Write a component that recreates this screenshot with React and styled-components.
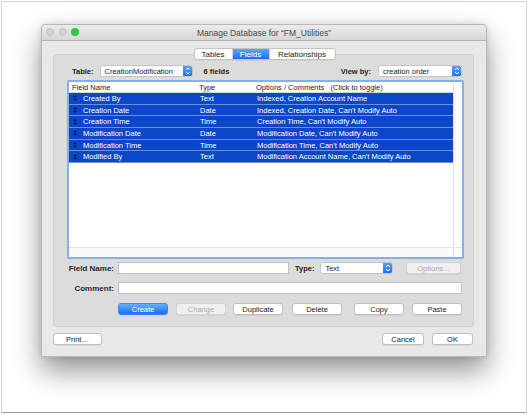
import React from "react";
import styled, { createGlobalStyle } from "styled-components";

const GlobalStyle = createGlobalStyle`
  html, body {
    margin: 0;
    padding: 0;
    background: #ffffff;
  }
  body {
    font-family: "Liberation Sans", Arial, sans-serif;
    color: #1e1e1e;
  }
`;

const Frame = styled.div`
  box-sizing: border-box;
  margin: 1px 0 0 1px;
  width: 526px;
  height: 412px;
  border: 1px solid #d2d2d2;
  border-bottom-color: #9a9a9a;
  padding: 22px 0 0 39px;
`;

const Window = styled.div`
  box-sizing: border-box;
  width: 446px;
  height: 333px;
  background: #e8e8e8;
  border: 1px solid #b8b8b8;
  border-radius: 4px 4px 2px 2px;
  box-shadow: 0 14px 28px rgba(0, 0, 0, 0.42), 0 0 6px rgba(0, 0, 0, 0.12);
  display: flex;
  flex-direction: column;
`;

const TitleBar = styled.div`
  height: 15px;
  display: flex;
  align-items: center;
  justify-content: center;
  position: relative;
  background: linear-gradient(#ececec, #d6d6d6);
  border-bottom: 1px solid #b4b4b4;
  border-radius: 4px 4px 0 0;
  font-size: 8.5px;
  color: #4a4a4a;
`;

const Lights = styled.div`
  position: absolute;
  left: 4px;
  top: 3px;
  display: flex;
  gap: 4.5px;
`;

const Light = styled.span`
  width: 8px;
  height: 8px;
  border-radius: 50%;
  background: ${({ $color }) => $color};
  border: ${({ $color }) => ($color === "#2ac940" ? "none" : "0.5px solid #c4c4c4")};
  box-sizing: border-box;
`;

const Body = styled.div`
  flex: 1;
  display: flex;
  flex-direction: column;
  padding: 7px 12px 11px 11px;
`;

const Tabs = styled.div`
  position: relative;
  z-index: 1;
  align-self: center;
  display: flex;
  height: 12px;
  margin-bottom: -6px;
  margin-left: 2px;
  background: #fff;
  border: 1px solid #c3c3c3;
  border-radius: 3px;
  box-sizing: border-box;
  overflow: hidden;
  box-shadow: 0 0.5px 0 rgba(0, 0, 0, 0.08);
`;

const Tab = styled.div`
  display: flex;
  align-items: center;
  justify-content: center;
  width: ${({ $w }) => $w}px;
  font-size: 8px;
  color: ${({ $active }) => ($active ? "#fff" : "#1a1a1a")};
  background: ${({ $active }) => ($active ? "linear-gradient(#5ca8fb, #1b6ff3)" : "transparent")};
  border-left: ${({ $first }) => ($first ? "none" : "1px solid #d4d4d4")};
`;

const Panel = styled.div`
  height: 273px;
  box-sizing: border-box;
  background: #dcdcdc;
  border: 1px solid #d2d2d2;
  border-radius: 3px;
  padding: 10px 9px 0 13px;
  display: flex;
  flex-direction: column;
`;

const TopRow = styled.div`
  display: flex;
  align-items: center;
  height: 12px;
  font-size: 7.5px;
  padding-left: 5px;
`;

const Label = styled.span`
  font-size: 7.5px;
  font-weight: ${({ $bold }) => ($bold ? "bold" : "normal")};
  color: #222;
  white-space: nowrap;
  margin-left: ${({ $ml }) => $ml || 0}px;
  margin-right: ${({ $mr }) => $mr || 0}px;
`;

const SelectBox = styled.div`
  box-sizing: border-box;
  width: ${({ $w }) => $w}px;
  height: 12px;
  display: flex;
  align-items: center;
  background: #fff;
  border: 1px solid #c4c4c4;
  border-radius: 2.5px;
  padding-left: 4px;
  font-size: 7.5px;
  color: #1a1a1a;
  margin-left: ${({ $ml }) => $ml || 0}px;
  margin-right: ${({ $mr }) => $mr || 0}px;
  overflow: hidden;
`;

const SelectText = styled.span`
  flex: 1;
  white-space: nowrap;
`;

const Stepper = styled.span`
  width: 10px;
  height: 12px;
  margin-right: -1px;
  display: flex;
  align-items: center;
  justify-content: center;
  background: linear-gradient(#5aa6fb, #1c70f2);
  border-radius: 0 2.5px 2.5px 0;
`;

const Spacer = styled.div`
  flex: 1;
`;

const List = styled.div`
  box-sizing: border-box;
  margin-top: 3px;
  width: 397px;
  height: 179px;
  background: #fff;
  border: 2px solid #86adec;
  border-radius: 2px;
  display: grid;
  grid-template-columns: 1fr 9px;
  grid-template-rows: 1fr 10px;
`;

const ListMain = styled.div`
  overflow: hidden;
`;

const VTrack = styled.div`
  border-left: 1px solid #e3e3e3;
  background: #fafafa;
`;

const HTrack = styled.div`
  border-top: 1px solid #e3e3e3;
  background: #fafafa;
`;

const Corner = styled.div`
  border-top: 1px solid #e3e3e3;
  border-left: 1px solid #e3e3e3;
  background: #fafafa;
`;

const HeaderRow = styled.div`
  display: grid;
  grid-template-columns: 127px 57px 1fr;
  height: 10px;
  align-items: center;
  padding-left: 3px;
  border-bottom: 1px solid #d6d6d6;
  font-size: 7.5px;
  color: #222;
  white-space: nowrap;
`;

const Row = styled.div`
  display: grid;
  grid-template-columns: 10px 117px 57px 1fr;
  height: 11.7px;
  box-sizing: border-box;
  align-items: center;
  padding-left: 4px;
  background: #0c47c9;
  border-bottom: 0.8px solid #6d8fdc;
  font-size: 7.5px;
  color: #fff;
  white-space: nowrap;
`;

const Grip = () => (
  <svg width="4" height="6" viewBox="0 0 4 6">
    <path d="M2 0 L4 2 L0 2 Z M2 6 L4 4 L0 4 Z" fill="#0a1f55" />
    <rect x="1.5" y="2" width="1" height="2" fill="#0a1f55" />
  </svg>
);

const Chevrons = () => (
  <svg width="6" height="8" viewBox="0 0 6 8">
    <path d="M1 3 L3 1 L5 3 M1 5 L3 7 L5 5" fill="none" stroke="#fff" strokeWidth="1" />
  </svg>
);

const FormRow = styled.div`
  display: flex;
  align-items: center;
  height: 12px;
  margin-top: ${({ $mt }) => $mt}px;
`;

const FormLabel = styled.span`
  width: 47px;
  text-align: right;
  font-size: 8px;
  font-weight: bold;
  color: #2a2a2a;
  margin-right: 4px;
  white-space: nowrap;
`;

const Input = styled.div`
  box-sizing: border-box;
  width: ${({ $w }) => $w}px;
  height: 12px;
  background: #fff;
  border: 1px solid #c2c2c2;
`;

const Button = styled.div`
  box-sizing: border-box;
  width: ${({ $w }) => $w || 50}px;
  height: 12px;
  margin-left: ${({ $ml }) => $ml || 0}px;
  display: flex;
  align-items: center;
  justify-content: center;
  font-size: 7.5px;
  border-radius: 3px;
  white-space: nowrap;
  color: ${({ $kind }) => ($kind === "primary" ? "#fff" : $kind === "disabled" ? "#a8a8a8" : "#1a1a1a")};
  background: ${({ $kind }) =>
    $kind === "primary"
      ? "linear-gradient(#66b0fb, #176ef2)"
      : $kind === "disabled"
      ? "#f0f0f0"
      : "#fff"};
  border: 1px solid
    ${({ $kind }) => ($kind === "primary" ? "#3f8af4" : $kind === "disabled" ? "#d4d4d4" : "#c0c0c0")};
  box-shadow: 0 0.5px 0.5px rgba(0, 0, 0, 0.12);
`;

const Footer = styled.div`
  display: flex;
  align-items: center;
  margin-top: 6px;
  margin-right: 1px;
`;

const rows = [
  ["Created By", "Text", "Indexed, Creation Account Name"],
  ["Creation Date", "Date", "Indexed, Creation Date, Can't Modify Auto"],
  ["Creation Time", "Time", "Creation Time, Can't Modify Auto"],
  ["Modification Date", "Date", "Modification Date, Can't Modify Auto"],
  ["Modification Time", "Time", "Modification Time, Can't Modify Auto"],
  ["Modified By", "Text", "Modification Account Name, Can't Modify Auto"],
];

export default function App() {
  return (
    <>
      <GlobalStyle />
      <Frame>
        <Window>
          <TitleBar>
            <Lights>
              <Light $color="#d3d3d3" />
              <Light $color="#d3d3d3" />
              <Light $color="#2ac940" />
            </Lights>
            Manage Database for “FM_Utilities”
          </TitleBar>
          <Body>
            <Tabs>
              <Tab $w={37} $first>Tables</Tab>
              <Tab $w={36} $active>Fields</Tab>
              <Tab $w={65}>Relationships</Tab>
            </Tabs>
            <Panel>
              <TopRow>
                <Label $bold>Table:</Label>
                <SelectBox $w={93} $ml={6}>
                  <SelectText>CreationModification</SelectText>
                  <Stepper><Chevrons /></Stepper>
                </SelectBox>
                <Label $bold $ml={11}>6 fields</Label>
                <Spacer />
                <Label $bold $mr={7}>View by:</Label>
                <SelectBox $w={84} $mr={2}>
                  <SelectText>creation order</SelectText>
                  <Stepper><Chevrons /></Stepper>
                </SelectBox>
              </TopRow>
              <List>
                <ListMain>
                  <HeaderRow>
                    <span>Field Name</span>
                    <span>Type</span>
                    <span>Options / Comments &nbsp;&nbsp;(Click to toggle)</span>
                  </HeaderRow>
                  {rows.map(([name, type, opts]) => (
                    <Row key={name}>
                      <Grip />
                      <span>{name}</span>
                      <span>{type}</span>
                      <span>{opts}</span>
                    </Row>
                  ))}
                </ListMain>
                <VTrack />
                <HTrack />
                <Corner />
              </List>
              <FormRow $mt={3}>
                <FormLabel>Field Name:</FormLabel>
                <Input $w={171} />
                <Label $bold $ml={6} $mr={6}>Type:</Label>
                <SelectBox $w={73}>
                  <SelectText>Text</SelectText>
                  <Stepper><Chevrons /></Stepper>
                </SelectBox>
                <Button $kind="disabled" $w={55} $ml={13}>Options…</Button>
              </FormRow>
              <FormRow $mt={8}>
                <FormLabel>Comment:</FormLabel>
                <Input $w={344} />
              </FormRow>
              <FormRow $mt={9}>
                <Button $kind="primary" $ml={51}>Create</Button>
                <Button $kind="disabled" $ml={8}>Change</Button>
                <Button $ml={7}>Duplicate</Button>
                <Button $ml={9}>Delete</Button>
                <Button $ml={12}>Copy</Button>
                <Button $ml={8}>Paste</Button>
              </FormRow>
            </Panel>
            <Footer>
              <Button $w={49}>Print…</Button>
              <Spacer />
              <Button $w={42}>Cancel</Button>
              <Button $w={41} $ml={8}>OK</Button>
            </Footer>
          </Body>
        </Window>
      </Frame>
    </>
  );
}
